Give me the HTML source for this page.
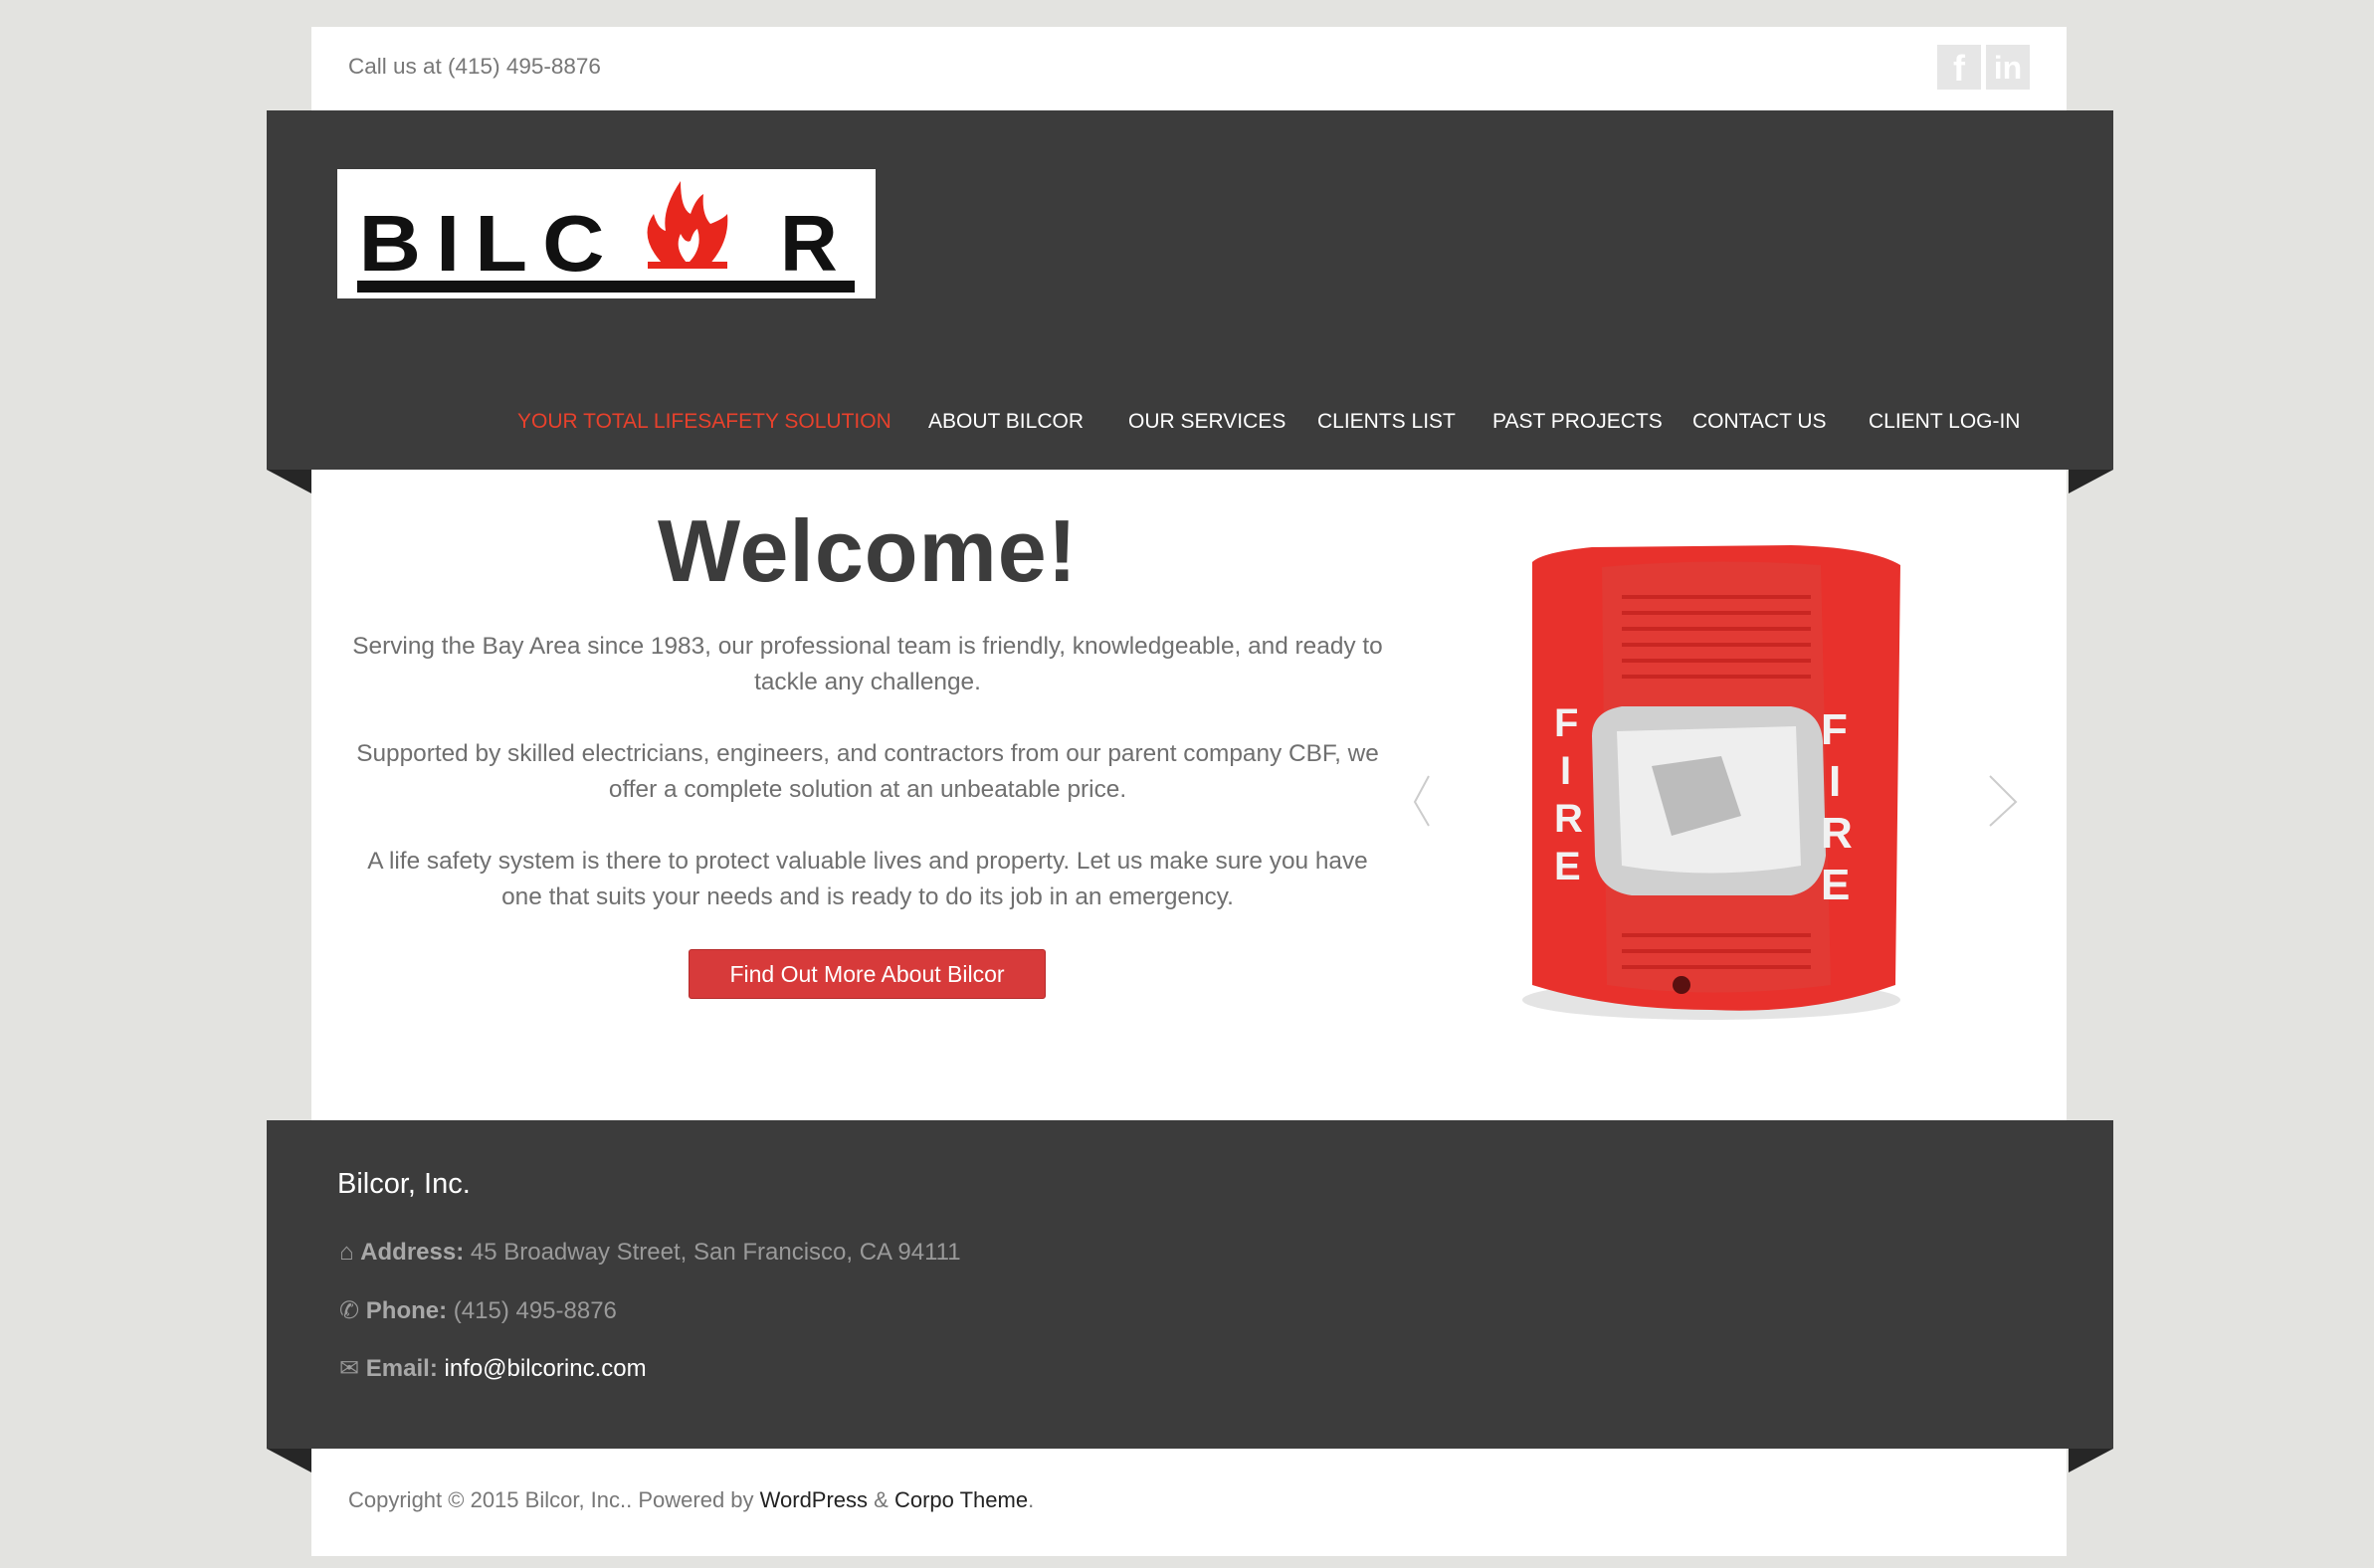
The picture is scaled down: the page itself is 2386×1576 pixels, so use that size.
<!DOCTYPE html>
<html><head><meta charset="utf-8"><style>
*{margin:0;padding:0;box-sizing:border-box}
body{width:2386px;height:1576px;background:#e3e3e0;font-family:"Liberation Sans",sans-serif;position:relative;overflow:hidden}
.abs{position:absolute}
.top{left:313px;top:27px;width:1764px;height:84px;background:#fff}
.dark{background:#3c3c3c;left:268px;width:1856px}
.nav{top:412px;font-size:21px;color:#fff;white-space:nowrap}
p.t{position:absolute;left:300px;width:1144px;text-align:center;font-size:24.4px;line-height:36px;color:#6f6f6f;white-space:nowrap}
.fl{position:absolute;font-size:24px;color:#9a9a9a;left:341px}
.fl b{color:#a8a8a8}
</style></head><body>
<div class="abs top"></div>
<div class="abs" style="left:350px;top:54px;font-size:22.5px;color:#777">Call us at (415) 495-8876</div>
<div class="abs" style="left:1947px;top:45px;width:44px;height:45px;background:#e6e6e6;color:#fff;font-size:36px;font-weight:bold;text-align:center;line-height:48px">f</div>
<div class="abs" style="left:1996px;top:45px;width:44px;height:45px;background:#e6e6e6;color:#fff;font-size:32px;font-weight:bold;text-align:center;line-height:46px">in</div>

<div class="abs dark" style="top:111px;height:361px"></div>
<div class="abs" style="left:268px;top:472px;width:0;height:0;border-top:24px solid #262626;border-left:45px solid transparent"></div>
<div class="abs" style="left:2079px;top:472px;width:0;height:0;border-top:24px solid #262626;border-right:45px solid transparent"></div>

<div class="abs" style="left:339px;top:170px;width:541px;height:130px;background:#fff">
<svg width="541" height="130" viewBox="0 0 541 130">
<text x="20" y="102" font-family="Liberation Sans" font-weight="bold" font-size="80" fill="#111" letter-spacing="14" transform="scale(1.08,1)">BILC</text>
<text x="445" y="102" font-family="Liberation Sans" font-weight="bold" font-size="80" fill="#111">R</text>
<path d="M370 100 L332 100 Q300 70 318 45 Q322 60 330 62 Q326 40 345 12 Q345 40 355 45 Q360 30 368 25 Q366 45 375 55 Q388 50 392 45 Q395 75 370 100Z" fill="#e8261c"/>
<path d="M352 95 Q338 80 345 65 Q350 75 355 72 Q358 62 362 60 Q368 80 352 95Z" fill="#fff"/>
<rect x="312" y="93" width="80" height="7" fill="#e8261c"/>
<rect x="20" y="112" width="500" height="12" fill="#111"/>
</svg></div>

<div class="abs nav" style="left:520px;color:#e8412c">YOUR TOTAL LIFESAFETY SOLUTION</div>
<div class="abs nav" style="left:933px">ABOUT BILCOR</div>
<div class="abs nav" style="left:1134px">OUR SERVICES</div>
<div class="abs nav" style="left:1324px">CLIENTS LIST</div>
<div class="abs nav" style="left:1500px">PAST PROJECTS</div>
<div class="abs nav" style="left:1701px">CONTACT US</div>
<div class="abs nav" style="left:1878px">CLIENT LOG-IN</div>

<div class="abs" style="left:313px;top:472px;width:1764px;height:654px;background:#fff"></div>
<div class="abs" style="left:340px;top:503px;width:1064px;text-align:center;font-size:88px;font-weight:bold;color:#3c3c3c;letter-spacing:1px">Welcome!</div>
<p class="t" style="top:632px">Serving the Bay Area since 1983, our professional team is friendly, knowledgeable, and ready to<br>tackle any challenge.</p>
<p class="t" style="top:740px">Supported by skilled electricians, engineers, and contractors from our parent company CBF, we<br>offer a complete solution at an unbeatable price.</p>
<p class="t" style="top:848px">A life safety system is there to protect valuable lives and property. Let us make sure you have<br>one that suits your needs and is ready to do its job in an emergency.</p>
<div class="abs" style="left:692px;top:954px;width:359px;height:50px;background:#d73a3a;border:1px solid #b52a2a;border-radius:3px;color:#fff;font-size:23px;text-align:center;line-height:48px">Find Out More About Bilcor</div>

<svg class="abs" style="left:1400px;top:520px" width="680" height="540" viewBox="0 0 680 540">
<path d="M36 260 L22 286 L36 310" stroke="#ccc" stroke-width="2" fill="none"/>
<path d="M600 260 L626 286 L600 310" stroke="#ccc" stroke-width="2" fill="none"/>
<ellipse cx="320" cy="485" rx="190" ry="20" fill="#e4e4e4"/>
<path d="M140 45 Q150 35 200 30 L400 28 Q480 30 510 48 L505 470 Q420 500 320 495 Q220 495 140 470 Z" fill="#e8312c"/>
<path d="M210 50 Q320 40 430 48 L440 470 Q320 485 215 470 Z" fill="#e23a34"/>
<g stroke="#c92622" stroke-width="4">
<line x1="230" y1="80" x2="420" y2="80"/><line x1="230" y1="96" x2="420" y2="96"/><line x1="230" y1="112" x2="420" y2="112"/><line x1="230" y1="128" x2="420" y2="128"/><line x1="230" y1="144" x2="420" y2="144"/><line x1="230" y1="160" x2="420" y2="160"/>
<line x1="230" y1="420" x2="420" y2="420"/><line x1="230" y1="436" x2="420" y2="436"/><line x1="230" y1="452" x2="420" y2="452"/></g>
<path d="M200 220 Q200 195 230 190 L400 190 Q430 195 432 225 L435 340 Q430 375 400 380 L240 380 Q205 375 203 340Z" fill="#d0d0d0"/>
<path d="M225 215 L405 210 L410 350 Q320 365 230 350Z" fill="#eeeeee"/>
<path d="M260 250 L330 240 L350 300 L280 320Z" fill="#bcbcbc"/>
<circle cx="290" cy="470" r="9" fill="#5a1010"/>
<g font-family="Liberation Sans" font-weight="bold" fill="#f2f2f2" font-size="40">
<text x="162" y="220">F</text><text x="168" y="268">I</text><text x="162" y="316">R</text><text x="162" y="364">E</text>
<text x="430" y="228" font-size="44">F</text><text x="438" y="280" font-size="44">I</text><text x="430" y="332" font-size="44">R</text><text x="430" y="384" font-size="44">E</text></g>
</svg>

<div class="abs dark" style="top:1126px;height:330px"></div>
<div class="abs" style="left:268px;top:1456px;width:0;height:0;border-top:24px solid #262626;border-left:45px solid transparent"></div>
<div class="abs" style="left:2079px;top:1456px;width:0;height:0;border-top:24px solid #262626;border-right:45px solid transparent"></div>
<div class="abs" style="left:339px;top:1174px;font-size:29px;color:#fff">Bilcor, Inc.</div>
<div class="fl" style="top:1245px">&#8962; <b>Address:</b> 45 Broadway Street, San Francisco, CA 94111</div>
<div class="fl" style="top:1303px">&#9990; <b>Phone:</b> (415) 495-8876</div>
<div class="fl" style="top:1361px">&#9993; <b>Email:</b> <span style="color:#fff">info@bilcorinc.com</span></div>

<div class="abs" style="left:313px;top:1456px;width:1764px;height:108px;background:#fff"></div>
<div class="abs" style="left:350px;top:1495px;font-size:22px;color:#777">Copyright © 2015 Bilcor, Inc.. Powered by <span style="color:#222">WordPress</span> &amp; <span style="color:#222">Corpo Theme</span>.</div>
</body></html>
